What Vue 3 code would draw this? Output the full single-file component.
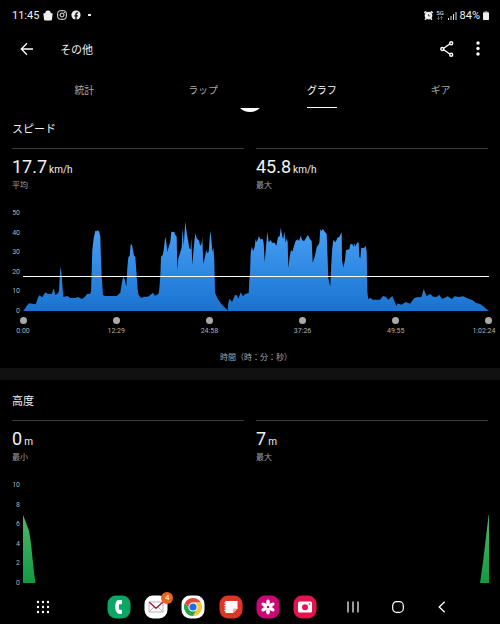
<script setup>
import { ref } from 'vue'

const tabs = ['統計', 'ラップ', 'グラフ', 'ギア']
const active = ref(2)

const speedTrace =
  '23,311 24,310 26.7,306 29,303.3 35.7,304.3 37.7,298.3 39.3,295.3 42.3,297.3 45.3,292.3 48,294 51.7,294 53.7,288.3 55.3,295 57.3,293.7 59,291.3 59.7,276.7 60.7,266.3 62,280 63.3,297 67.3,296 70.3,298 75,298 78,297 82,299 85,296.7 87,294 90,293.7 91,291.7 91.7,270 92.3,250 93.7,238.3 95.3,230.7 96.5,231.3 98,230.3 99.3,232 100.3,236.7 101,260 101.7,276.7 103,295 104.7,296 116.7,296 120.3,292.7 122,281.7 123.3,276.7 124.7,279.3 126.3,286.7 127.3,268.3 128.3,257.3 129.7,255.7 130.7,244.3 132,244.7 134,255.7 135.3,257 136.3,270 137.7,290 138.7,295.3 141.3,298 144,296.7 148,296.7 153,292.7 155,295.7 158.3,294 159,291.7 160.3,276.7 161,256.7 162.7,255 163.7,250 165.3,236.7 166.3,241.7 167.3,252.3 168.7,246.7 170.3,241.7 171.3,231.7 174.3,232 175.3,235 176.7,236.7 177.3,270 178.3,258.3 180,253.3 181.7,247.3 182.7,228.3 183.7,246 185.3,221.7 187,235 188.3,241.7 189.3,248.3 190.7,249.3 191.3,237.3 192.3,265 193.7,248.3 195.3,233.3 196.7,238.3 199,240.7 200.3,246 201.7,243.3 202.3,236.7 203.3,264 205,256.7 206.3,250 207.3,253.3 208.7,251.7 209.3,243.3 210.3,230.7 211.3,238.3 212.3,251.7 213.3,247.3 214.3,260 215,292.7 217.7,298.7 220.7,303.3 224,306.7 227.3,310 227.6,311 228.3,302.7 229.7,298.7 232,302 235,295 237,295.3 238.3,298.7 240.7,292.3 243,296.3 245,294 248.7,293 249.3,280 250,273.3 250.7,253.3 251.7,246.7 253.3,251 254.7,246.7 255.7,239 256.7,242.3 259,236 260.3,239.3 262.7,239 263.7,243.3 264.7,262.3 266,246.7 267.3,231.7 268.7,242.3 270.7,240 272,242.7 274.7,242.7 276.3,245.7 278,237.3 279.7,236 280.7,227.7 282.3,236.7 283.3,239 284.3,231.7 285.7,242.7 286.7,238.3 287.7,242.3 288.3,268.3 289.7,256.7 291,250 292.3,251.7 294,246 295.7,240.7 297.7,239.3 299,241 300.7,235.7 302,240 304,241.3 306.7,236.7 308,235 310,239.3 311.7,241 312.7,262.7 314.7,256.7 316.7,247.3 319.3,243.3 320.3,229 321.3,231 323,229 324.7,231.7 326.7,234 327.7,260 328.3,278.3 329.3,282.7 330.3,286.7 331.3,263.3 332.3,248.3 333.3,240 335.7,242.3 337.3,237.7 339,237.3 341.7,232.3 342,260 343.3,267.7 345,260 346,250 349.3,249.3 350.3,244.3 352.3,244 353.7,246.7 354.7,243.3 355.3,246.7 357.3,242.3 358.7,242.7 359.3,256.7 360.3,258.3 361.3,247.7 364,248 365.7,245.7 366.7,251.7 367.3,291.7 368.3,299.3 370.3,297.7 372.7,299.7 380,299.7 383,296 385.7,296.7 388.3,299.7 392.3,296 394.3,300.7 396.3,306 397.7,303.3 401.3,304.7 405.7,302 410,303.7 414.3,298 417.7,297 421.3,297.3 422.3,294 423.7,289 425,292.3 426.7,296.3 430,294 433.3,296.7 436.7,297 439,294.7 442.3,299 447.7,296.3 451.7,299 454.7,296.3 458.3,297 463.3,296.3 468.3,298.7 472.3,300 476,303 480.3,304 484,307 487.7,310 489,311'

const sections = [
  {
    id: 'speed',
    title: 'スピード',
    stats: [
      { value: '17.7', unit: 'km/h', label: '平均' },
      { value: '45.8', unit: 'km/h', label: '最大' },
    ],
    ticks: [50, 40, 30, 20, 10, 0],
    viewBox: '23 213 466 98',
    shapes: [speedTrace],
    colors: ['#4ba2f8', '#1873d0'],
    average: 276.5,
    times: ['0:00', '12:29', '24:58', '37:26', '49:55', '1:02:24'],
  },
  {
    id: 'altitude',
    title: '高度',
    stats: [
      { value: '0', unit: 'm', label: '最小' },
      { value: '7', unit: 'm', label: '最大' },
    ],
    ticks: [10, 8, 6, 4, 2, 0],
    viewBox: '0 0 466 98',
    shapes: [
      '0,98 0,30 2.7,36.7 6,45.7 8,58.3 10,78.3 11.3,90 12.4,98',
      '457,98 460,77 463,52 465.6,30 466,30 466,98',
    ],
    colors: ['#4fb868', '#109a43'],
  },
]
</script>

<template>
  <div class="screen">
    <div class="status">
      <div class="status-group">
        <span class="clock">11:45</span>
        <svg width="10" height="11" viewBox="0 0 10 11"><path d="M.3 3.200h2V2.600A2.500 2.500 0 0 1 5 .4a2.500 2.500 0 0 1 2.700 2.200v.6h2L9 9.300A1.300 1.300 0 0 1 7.700 10.500H2.300A1.300 1.300 0 0 1 1 9.300Z" fill="#eee" /></svg>
        <svg width="10" height="10" viewBox="0 0 10 10" fill="none" stroke="#eee"><rect x=".7" y=".7" width="8.600" height="8.600" rx="2.600" /><circle cx="5" cy="5" r="2" /><circle cx="7.300" cy="2.700" r=".3" /></svg>
        <svg width="10" height="10" viewBox="0 0 10 10"><circle cx="5" cy="5" r="4.600" fill="#eee" /><path d="M5 10V5.800M3.400 5.800h3.500M5 5.800V4.300Q5 2.700 7 2.900" fill="none" stroke="#000" stroke-width="1.300" /></svg>
        <span class="more-dot"></span>
      </div>
      <div class="status-group end">
        <svg width="9" height="9" viewBox="0 0 9 9"><circle cx="4.500" cy="4.600" r="3.800" fill="#eee" /><path d="M.3 2 2.200.4M6.800.4 8.700 2M1 8.700l1.300-1.300M8 8.700 6.700 7.400" stroke="#eee" stroke-width="1.500" /><path d="M4.500 3v1.900h1.900" fill="none" stroke="#000" stroke-width=".6" /></svg>
        <span class="net">
          <span>5G</span>
          <svg width="6" height="4" viewBox="0 0 6 4"><path d="M1.500 0v3.500M.3 2.300l1.200 1.200 1.200-1.200M4.500 4V.5M3.300 1.700 4.500.5l1.200 1.200" fill="none" stroke="#888" stroke-width=".7" /></svg>
        </span>
        <svg width="9" height="9" viewBox="0 0 9 9"><path d="M.5 9V7M3 9V5M5.500 9V3M8 9V1" stroke="#ddd" stroke-width="1" /></svg>
        <span class="percent">84%</span>
        <svg width="6" height="9" viewBox="0 0 6 9"><path d="M1.500 0h3v1.300h-3Z" fill="#777" /><rect y="1.300" width="6" height="7.700" rx=".8" fill="#eee" /></svg>
      </div>
    </div>

    <header class="bar">
      <button class="icon-btn" aria-label="戻る">
        <svg width="14" height="14" viewBox="0 0 14 14"><path d="M13 7H1.500M7 1.300 1.300 7 7 12.700" fill="none" stroke="#fff" stroke-width="1.300" /></svg>
      </button>
      <h1>その他</h1>
      <button class="icon-btn" aria-label="共有">
        <svg width="14" height="16" viewBox="0 0 14 16" fill="none" stroke="#fff" stroke-width="1.400"><path d="M3.700 7.200 9.700 3M3.700 8.800l6 4.200" /><circle cx="2.300" cy="8" r="1.500" /><circle cx="11.200" cy="2.300" r="1.500" /><circle cx="11.200" cy="13.700" r="1.500" /></svg>
      </button>
      <button class="icon-btn" aria-label="メニュー">
        <svg width="4" height="15" viewBox="0 0 4 15" fill="#fff"><circle cx="2" cy="2" r="1.700" /><circle cx="2" cy="7.500" r="1.700" /><circle cx="2" cy="13" r="1.700" /></svg>
      </button>
    </header>

    <nav class="tabs">
      <button v-for="(tab, i) in tabs" :key="tab" :class="{ active: i === active }" @click="active = i">
        <span>{{ tab }}</span>
      </button>
      <svg class="refresh" width="20" height="4" viewBox="0 0 20 4"><path d="M0 0h20Q16 4 10 4T0 0Z" fill="#fff" /></svg>
    </nav>

    <main>
      <section v-for="s in sections" :key="s.id">
        <h2>{{ s.title }}</h2>
        <div class="stats">
          <div v-for="stat in s.stats" :key="stat.label" class="stat">
            <p class="value">{{ stat.value }}<span>{{ stat.unit }}</span></p>
            <p class="label">{{ stat.label }}</p>
          </div>
        </div>
        <div class="chart">
          <div class="ticks">
            <span v-for="t in s.ticks" :key="t">{{ t }}</span>
          </div>
          <svg class="plot" :viewBox="s.viewBox" preserveAspectRatio="none">
            <defs>
              <linearGradient :id="s.id" x1="0" y1="0" x2="0" y2="1">
                <stop offset="0" :stop-color="s.colors[0]" />
                <stop offset="1" :stop-color="s.colors[1]" />
              </linearGradient>
            </defs>
            <polygon v-for="shape in s.shapes" :key="shape" :points="shape" :fill="`url(#${s.id})`" />
            <path v-if="s.average" :d="`M23 ${s.average}H489`" stroke="#fff" />
          </svg>
        </div>
        <template v-if="s.times">
          <div class="times">
            <div v-for="t in s.times" :key="t" class="time"><i></i><span>{{ t }}</span></div>
          </div>
          <p class="axis-title">時間（時：分：秒）</p>
        </template>
      </section>
    </main>

    <footer class="dock">
      <button aria-label="アプリ">
        <svg width="14" height="14" viewBox="0 0 14 14" fill="#fff">
          <template v-for="y in 3" :key="y"><circle v-for="x in 3" :key="x" :cx="x * 5 - 3" :cy="y * 5 - 3" r="1.200" /></template>
        </svg>
      </button>
      <div class="apps">
        <button aria-label="電話">
          <svg width="24" height="24" viewBox="0 0 24 24"><rect x=".5" y=".5" width="23" height="23" rx="8.500" fill="#0aa663" /><path d="M10.300 5.300 14 5q1 0 1 1v2.200q0 1-1 1h-1.800q-.8 2.800 0 5.600H14q1 0 1 1V18q0 1-1 1l-2.700-.3C9.200 17.500 8.200 15 8.200 12s.8-5.600 2.100-6.700Z" fill="#fff" /></svg>
        </button>
        <button class="mail" aria-label="メール">
          <svg width="24" height="24" viewBox="0 0 24 24"><rect x=".5" y=".5" width="23" height="23" rx="8.500" fill="#fff" /><path d="M5 7h14v10H5ZM5 17l5-5M19 17l-5-5" fill="none" stroke="#b5b5b8" /><path d="m5.300 7.300 6.700 5.900 6.700-5.900" fill="none" stroke="#b3123c" stroke-width="1.400" /></svg>
          <span class="badge">4</span>
        </button>
        <button aria-label="Chrome">
          <svg width="24" height="24" viewBox="0 0 24 24"><rect x=".5" y=".5" width="23" height="23" rx="8.500" fill="#fff" /><path d="M4.200 7.500a9 9 0 0 1 15.600 0H12L8.100 14.250Z" fill="#df4a38" /><path d="M19.800 7.500A9 9 0 0 1 12 21l3.900-6.750L12 7.500Z" fill="#fbc534" /><path d="M12 21A9 9 0 0 1 4.200 7.500l3.900 6.750h7.800Z" fill="#2da04e" /><circle cx="12" cy="12" r="4.600" fill="#fff" /><circle cx="12" cy="12" r="3.600" fill="#1d6ee6" /></svg>
        </button>
        <button aria-label="ノート">
          <svg width="24" height="24" viewBox="0 0 24 24"><rect x=".5" y=".5" width="23" height="23" rx="8.500" fill="#de3528" /><path d="M6.500 6h12v7.500L14 18H6.500Z" fill="#fff" /><path d="M18.500 13.500H15q-1 0-1 1V18Z" fill="#f0aaa3" /><path d="M5.300 8h2M5.300 10.500h2M5.300 13h2M5.300 15.500h2" stroke="#fff" stroke-width="1" /></svg>
        </button>
        <button aria-label="ギャラリー">
          <svg width="24" height="24" viewBox="0 0 24 24"><rect x=".5" y=".5" width="23" height="23" rx="8.500" fill="#cb0876" /><g fill="#fff"><ellipse v-for="n in 6" :key="n" cx="12" cy="7.800" rx="1.800" ry="3.200" :transform="`rotate(${n * 60} 12 12)`" /></g><circle cx="12" cy="12" r="1" fill="#cb0876" /></svg>
        </button>
        <button aria-label="カメラ">
          <svg width="24" height="24" viewBox="0 0 24 24"><rect x=".5" y=".5" width="23" height="23" rx="8.500" fill="#e4134f" /><path d="M6.500 6.500h11Q19 6.500 19 8v8q0 1.500-1.500 1.500h-11Q5 17.500 5 16V8q0-1.500 1.500-1.500Z" fill="#fff" /><circle cx="12" cy="12.200" r="3" fill="#e4134f" /><circle cx="16.500" cy="9" r=".8" fill="#e4134f" /></svg>
        </button>
      </div>
      <div class="system">
        <button aria-label="履歴">
          <svg width="12" height="12" viewBox="0 0 12 12"><path d="M1 .5v11M6 .5v11M11 .5v11" stroke="#fff" stroke-width="1.200" /></svg>
        </button>
        <button aria-label="ホーム">
          <svg width="12" height="12" viewBox="0 0 12 12"><rect x=".7" y=".7" width="10.600" height="10.600" rx="3.800" fill="none" stroke="#fff" stroke-width="1.200" /></svg>
        </button>
        <button aria-label="戻る">
          <svg width="8" height="12" viewBox="0 0 8 12"><path d="M6.700.7 1.200 6l5.500 5.300" fill="none" stroke="#fff" stroke-width="1.300" /></svg>
        </button>
      </div>
    </footer>
  </div>
</template>

<style>
body {
  margin: 0;
  background: #000;
}
</style>

<style scoped>
.screen {
  min-height: 100vh;
  display: flex;
  flex-direction: column;
  background: #000;
  color: #f2f2f2;
  font-family: Roboto, "Noto Sans CJK JP", sans-serif;
}
button {
  padding: 0;
  border: 0;
  background: none;
  color: inherit;
  font: inherit;
}
svg {
  display: block;
  flex: none;
}
h1, h2, p {
  margin: 0;
  font-weight: 400;
}
.status {
  display: flex;
  justify-content: space-between;
  align-items: center;
  height: 30px;
  padding: 0 11px 0 12px;
  font-size: 11px;
}
.status-group {
  display: flex;
  align-items: center;
  gap: 4px;
}
.status-group.end {
  gap: 3px;
}
.more-dot {
  width: 3px;
  height: 2px;
  margin-left: 3px;
  background: #eee;
}
.net {
  display: flex;
  flex-direction: column;
  align-items: center;
  width: 9px;
  font-size: 6px;
  line-height: 6px;
}
.bar {
  display: flex;
  align-items: center;
  height: 37px;
  padding: 0 10px 0 15px;
}
.icon-btn {
  display: flex;
  align-items: center;
  justify-content: center;
  width: 24px;
  height: 24px;
}
.icon-btn + .icon-btn {
  margin-left: 7px;
}
h1 {
  flex: 1;
  margin-left: 21px;
  font-size: 11px;
}
.tabs {
  position: relative;
  display: flex;
  height: 41px;
  padding-left: 25px;
}
.tabs button {
  flex: 1;
  display: flex;
  justify-content: center;
  align-items: flex-end;
  font-size: 10px;
  line-height: 15px;
  color: #a8a8a8;
}
.tabs span {
  padding-bottom: 9px;
  border-bottom: 1px solid transparent;
}
.tabs .active {
  color: #fff;
}
.tabs .active span {
  border-color: #fff;
}
.refresh {
  position: absolute;
  top: 100%;
  left: 50%;
  margin-left: -10px;
}
main {
  flex: 1;
}
section + section {
  border-top: 12px solid #111;
}
h2 {
  padding: 4px 12px 0;
  font-size: 11px;
  line-height: 36px;
}
.stats {
  display: grid;
  grid-template-columns: 1fr 1fr;
  gap: 12px;
  padding: 0 12px;
}
.stat {
  height: 65px;
  box-sizing: border-box;
  padding-top: 7px;
  border-top: 1px solid #3c3c3c;
}
.value {
  font-size: 18px;
  line-height: 22px;
}
.value span {
  margin-left: 2px;
  font-size: 10px;
}
.label {
  color: #a0a0a0;
  font-size: 8px;
  line-height: 10px;
}
.chart {
  display: flex;
  gap: 3px;
  padding-right: 11px;
}
.ticks {
  display: flex;
  flex-direction: column;
  justify-content: space-between;
  width: 20px;
  margin: -4px 0;
  text-align: right;
  color: #b0b0b0;
  font-size: 7px;
  line-height: 8px;
}
.plot {
  flex: 1;
  min-width: 0;
  height: 98px;
}
.times {
  display: flex;
  justify-content: space-between;
  padding: 6px 11px 0 23px;
}
.time {
  display: flex;
  flex-direction: column;
  align-items: center;
  gap: 3px;
  width: 0;
  white-space: nowrap;
  color: #b0b0b0;
  font-size: 7px;
  line-height: 8px;
}
.time i {
  width: 7px;
  height: 7px;
  border-radius: 50%;
  background: #aaa;
}
/* keeps the longest label inside the screen edge */
.time:last-child span {
  margin-right: 10px;
}
.axis-title {
  padding: 16px 11px 4px 23px;
  text-align: center;
  color: #a8a8a8;
  font-size: 8px;
  line-height: 13px;
}
.dock {
  display: grid;
  grid-template-columns: 24px 1fr 113px;
  align-items: center;
  height: 35px;
  padding: 0 46px 0 31px;
}
.dock button {
  display: flex;
  align-items: center;
  justify-content: center;
  width: 24px;
  height: 24px;
}
.apps,
.system {
  display: flex;
  justify-content: space-between;
}
.apps {
  margin: 0 24px 0 52px;
}
.mail {
  position: relative;
}
.badge {
  position: absolute;
  top: -3px;
  right: -5px;
  width: 12px;
  height: 12px;
  border-radius: 50%;
  background: #e8641f;
  color: #fff;
  font-size: 8px;
  line-height: 12px;
  text-align: center;
}
</style>
